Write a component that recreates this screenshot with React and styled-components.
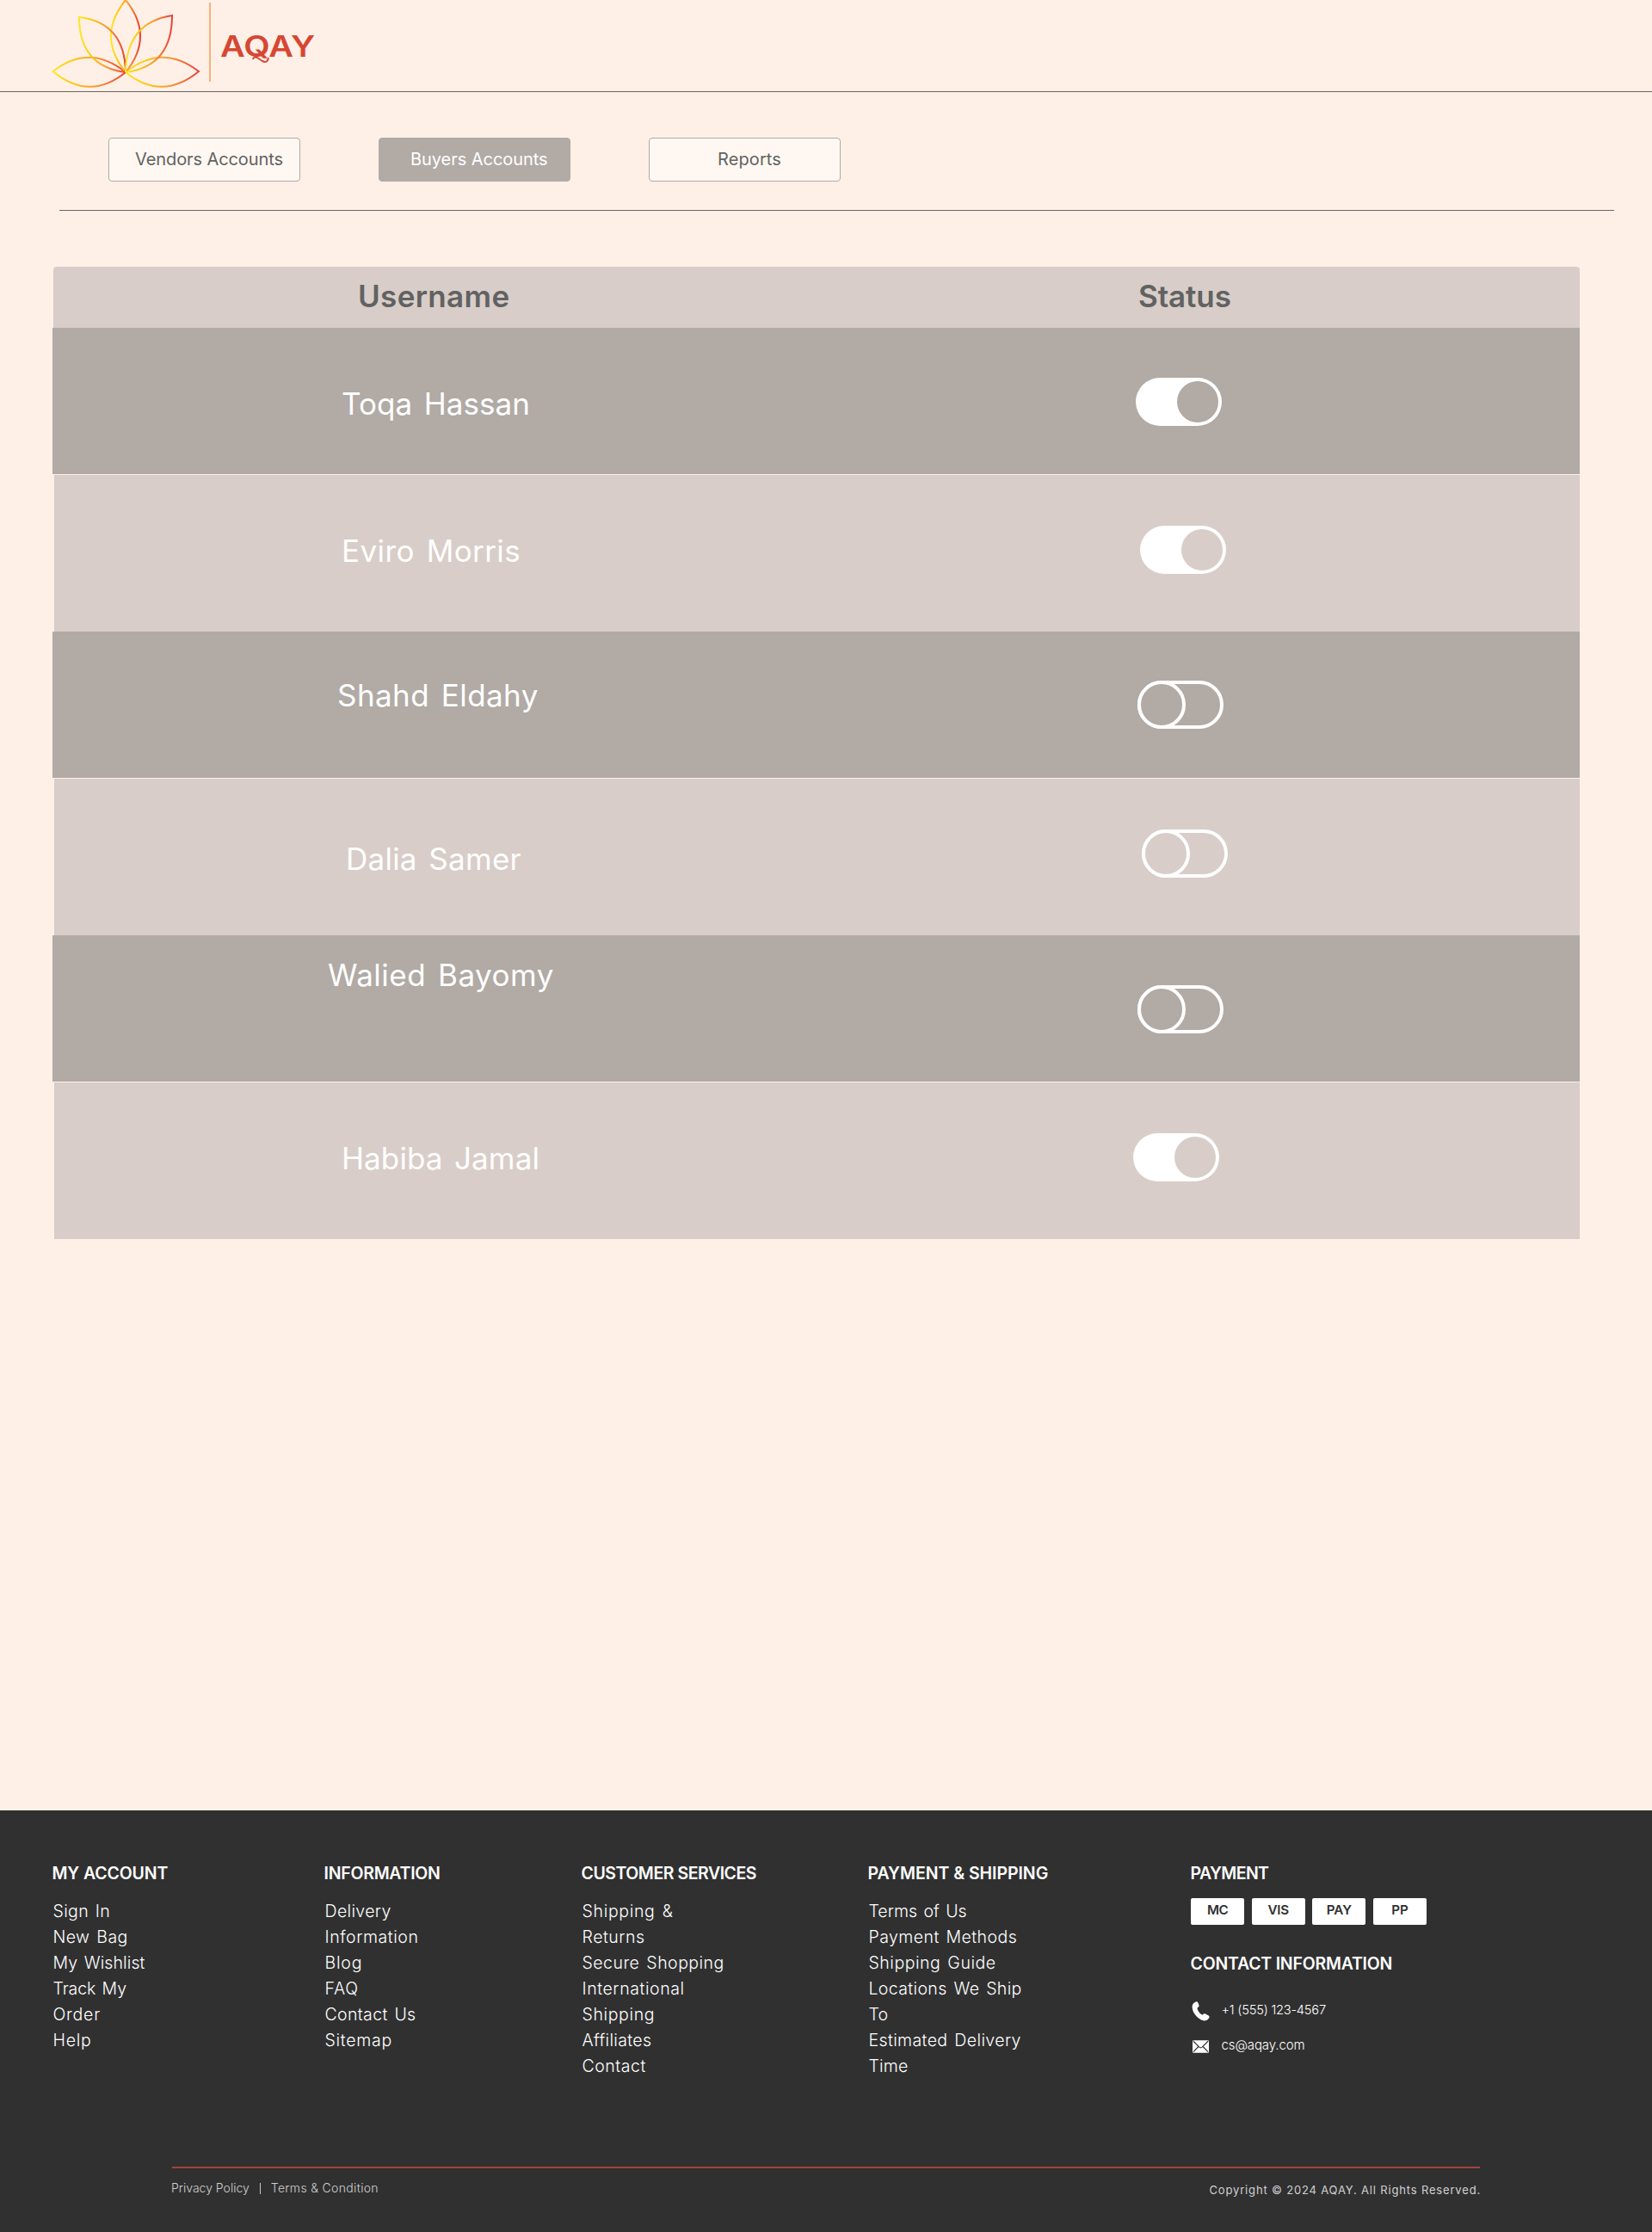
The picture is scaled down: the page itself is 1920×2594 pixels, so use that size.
import React from 'react';
import styled, { createGlobalStyle } from 'styled-components';

const GlobalStyle = createGlobalStyle`
  * { box-sizing: border-box; }
  body {
    margin: 0;
    background: #fff0e7;
    font-family: Inter, "Noto Sans", sans-serif;
  }
`;

const Page = styled.div`
  display: flex;
  flex-direction: column;
  width: 1920px;
  height: 2594px;
  background: #fff0e7;
  overflow: hidden;
`;

const Text = styled.span`
  display: block;
  white-space: nowrap;
  letter-spacing: ${(p) => p.$ls || 0}px;
`;

/* ---------- header ---------- */

const Header = styled.header`
  display: flex;
  align-items: flex-start;
  height: 107px;
  padding-left: 60px;
  border-bottom: 1px solid #686565;
`;

const Lotus = styled.svg`
  display: block;
  width: 174px;
  height: 106px;
`;

const BrandRule = styled.div`
  width: 2px;
  height: 92px;
  margin: 3px 0 0 9px;
  background: #f8b07a;
`;

const Brand = styled.div`
  position: relative;
  margin: 34px 0 0 11px;
`;

const BrandName = styled(Text)`
  color: #d64734;
  font-size: 33.5px;
  font-weight: 600;
  line-height: 40px;
  transform: scaleX(1.18);
  transform-origin: left;
`;

const Swash = styled.svg`
  position: absolute;
  left: 35px;
  top: 30px;
  width: 24px;
  height: 10px;
`;

const petals = [
  ['M146 84Q104 50 61.500 83Q104 118 146 84', 'flat-left'],
  ['M146 84Q188 118 231 83Q188 50 146 84', 'flat-right'],
  ['M146 84Q112 42 146 0Q180 42 146 84', 'top'],
  ['M146 84Q145 26 92 20Q92 77 146 84', 'upper-left'],
  ['M146 84Q147 26 200 18Q200 77 146 84', 'upper-right'],
];

function Logo() {
  return (
    <Lotus viewBox="60 0 174 106" fill="none">
      <defs>
        <linearGradient id="petal">
          <stop offset="0" stopColor="#ffe629" />
          <stop offset="0.3" stopColor="#fcc60f" />
          <stop offset="0.6" stopColor="#f59a38" />
          <stop offset="1" stopColor="#e8413a" />
        </linearGradient>
      </defs>
      {petals.map(([d, id]) => (
        <path key={id} d={d} stroke="url(#petal)" strokeWidth="2" />
      ))}
    </Lotus>
  );
}

/* ---------- tabs ---------- */

const Tabs = styled.nav`
  display: flex;
  gap: 91px;
  padding: 53px 0 0 126px;
`;

const Tab = styled.button`
  width: 223px;
  height: 51px;
  padding: 0 0 1px ${(p) => p.$indent}px;
  border: 1px solid #b1aaa5;
  border-radius: 4px;
  background: ${(p) => (p.$active ? '#b1aaa5' : '#fff8f2')};
  color: ${(p) => (p.$active ? '#fff' : '#626262')};
  font: 400 20px/48px Inter, sans-serif;
  text-align: left;
`;

const Divider = styled.div`
  width: 1807px;
  height: 1px;
  margin: 33px 0 0 69px;
  background: #656866;
`;

/* ---------- table ---------- */

const Table = styled.section`
  display: flex;
  flex-direction: column;
  align-items: flex-end;
  width: 1836px;
  margin-top: 65px;
`;

const HeadRow = styled.div`
  display: grid;
  grid-template-columns: 1fr 519px;
  width: 1774px;
  height: 71px;
  padding-top: 12px;
  border-radius: 4px 4px 0 0;
  background: #d8cdc8;
  color: #616262;
  font-size: 35px;
  font-weight: 600;
  line-height: 44px;
`;

const HeadCell = styled(Text)`
  padding-left: ${(p) => p.$indent}px;
`;

const Row = styled.div`
  display: grid;
  grid-template-columns: 1fr 519px;
  align-items: start;
  width: ${(p) => (p.$dark ? 1775 : 1773)}px;
  height: ${(p) => (p.$dark ? 170 : 182)}px;
  margin-bottom: ${(p) => (p.$dark ? 1 : 0)}px;
  background: ${(p) => (p.$dark ? '#b1aaa5' : '#d8cdc8')};
`;

const Name = styled(Text)`
  margin: ${(p) => p.$top}px 0 0 ${(p) => p.$indent}px;
  color: #fff;
  font-size: 35px;
  font-weight: 400;
  line-height: 40px;
  word-spacing: 3.5px;
`;

const Switch = styled.div`
  display: flex;
  justify-content: ${(p) => (p.$on ? 'flex-end' : 'flex-start')};
  align-items: center;
  width: 100px;
  height: 56px;
  margin: ${(p) => p.$top}px 0 0 ${(p) => p.$indent}px;
  border: ${(p) => (p.$on ? 0 : 4)}px solid #fff;
  padding: ${(p) => (p.$on ? '0 4px' : '0')};
  border-radius: 28px;
  background: ${(p) => (p.$on ? '#fff' : 'transparent')};
`;

const Knob = styled.div`
  flex: none;
  width: ${(p) => (p.$on ? 48 : 56)}px;
  height: ${(p) => (p.$on ? 48 : 56)}px;
  margin-left: ${(p) => (p.$on ? 0 : -4)}px;
  border: ${(p) => (p.$on ? 0 : 4)}px solid #fff;
  border-radius: 50%;
  background: ${(p) => (p.$dark ? '#b1aaa5' : '#d8cdc8')};
`;

const users = [
  { name: 'Toqa Hassan', ls: 0.08, indent: 336, top: 68, on: true, sx: 3, sy: 58 },
  { name: 'Eviro Morris', ls: 0.42, indent: 334, top: 68, on: true, sx: 8, sy: 59 },
  { name: 'Shahd Eldahy', ls: 0.42, indent: 331, top: 54, on: false, sx: 5, sy: 57 },
  { name: 'Dalia Samer', ls: 0.25, indent: 339, top: 73, on: false, sx: 10, sy: 59 },
  { name: 'Walied Bayomy', ls: 0.5, indent: 320, top: 26, on: false, sx: 5, sy: 58 },
  { name: 'Habiba Jamal', ls: 0.1, indent: 334, top: 68, on: true, sx: 0, sy: 59 },
];

/* ---------- footer ---------- */

const Footer = styled.footer`
  flex: none;
  height: 490px;
  margin-top: auto;
  padding-top: 61px;
  background: #303030;
  color: #fff;
`;

const Columns = styled.div`
  display: grid;
  grid-template-columns: 316px 299px 333px 375px auto;
  height: 353px;
  padding-left: 60.5px;
`;

const Heading = styled(Text)`
  font-size: 19.5px;
  font-weight: 600;
  line-height: 24px;
  margin-top: ${(p) => p.$top || 0}px;
`;

const Links = styled.div`
  padding: 17px 0 0 1px;
`;

const Item = styled(Text)`
  font-size: 19.5px;
  font-weight: 300;
  line-height: 30px;
  word-spacing: 2px;
`;

const Cards = styled.div`
  display: flex;
  gap: 8.700px;
  margin: 17px 0 0 0.5px;
`;

const Card = styled.div`
  display: flex;
  justify-content: center;
  width: 62px;
  height: 31px;
  border-radius: 2px;
  background: #fff;
  color: #303030;
  font-size: 15.200px;
  font-weight: 600;
  line-height: 28px;
`;

const Contact = styled.div`
  display: flex;
  gap: 14px;
  height: 24px;
  margin: ${(p) => p.$top}px 0 0 1px;
  font-size: ${(p) => p.$size}px;
  font-weight: 300;
  line-height: 24px;
`;

const PhoneIcon = styled.svg`
  width: 21px;
  height: 23px;
  margin-top: 2px;
`;

const MailIcon = styled.svg`
  width: 19px;
  height: 15px;
  margin: 6px 1px 0;
`;

const Bottom = styled.div`
  display: flex;
  justify-content: space-between;
  width: 1520px;
  margin-left: 200px;
  padding-top: 13px;
  border-top: 2px solid #a3423e;
  color: #d0d0d0;
`;

const Legal = styled.div`
  display: flex;
  gap: 12px;
  margin-left: -1px;
  font-size: 14px;
  font-weight: 300;
  line-height: 20px;
`;

const Pipe = styled.div`
  width: 1px;
  height: 13px;
  margin-top: 4px;
  background: #c8c8c8;
`;

const Copyright = styled(Text)`
  margin: 2px -1px 0 0;
  font-size: 13px;
  line-height: 20px;
`;

const columns = [
  ['MY ACCOUNT', -0.12, [['Sign In', 0.35], ['New Bag', 0.42], ['My Wishlist', 0.1], ['Track My', -0.1], ['Order', 0.8], ['Help', 0.77]]],
  ['INFORMATION', -0.25, [['Delivery', 0.36], ['Information', 0.57], ['Blog', 0.8], ['FAQ', 0.8], ['Contact Us', 0.35], ['Sitemap', 0.74]]],
  ['CUSTOMER SERVICES', -0.46, [['Shipping &', 0.68], ['Returns', 0.52], ['Secure Shopping', 0.48], ['International', 0.58], ['Shipping', 0.63], ['Affiliates', 0.35], ['Contact', 0.54]]],
  ['PAYMENT & SHIPPING', -0.04, [['Terms of Us', 0], ['Payment Methods', 0.44], ['Shipping Guide', 0.53], ['Locations We Ship', 0.36], ['To', 0.13], ['Estimated Delivery', 0.39], ['Time', 0.2]]],
];

export default function App() {
  return (
    <Page>
      <GlobalStyle />
      <Header>
        <Logo />
        <BrandRule />
        <Brand>
          <BrandName>AQAY</BrandName>
          <Swash viewBox="0 0 24 10" fill="none">
            <path d="M3 5Q4 1 8 3L14 7Q20 10 21 3" stroke="#d64734" strokeWidth="2" />
          </Swash>
        </Brand>
      </Header>

      <Tabs>
        <Tab $indent={30}><Text $ls={-0.09}>Vendors Accounts</Text></Tab>
        <Tab $indent={36} $active><Text $ls={-0.05}>Buyers Accounts</Text></Tab>
        <Tab $indent={79}><Text $ls={0.1}>Reports</Text></Tab>
      </Tabs>
      <Divider />

      <Table>
        <HeadRow>
          <HeadCell $indent={354} $ls={0.35}>Username</HeadCell>
          <HeadCell $indent={6} $ls={-0.1}>Status</HeadCell>
        </HeadRow>
        {users.map((u, i) => {
          const dark = i % 2 === 0;
          return (
            <Row key={u.name} $dark={dark}>
              <Name $ls={u.ls} $top={u.top} $indent={u.indent}>{u.name}</Name>
              <Switch $on={u.on} $top={u.sy} $indent={u.sx}>
                <Knob $on={u.on} $dark={dark} />
              </Switch>
            </Row>
          );
        })}
      </Table>

      <Footer>
        <Columns>
          {columns.map(([title, ls, items]) => (
            <div key={title}>
              <Heading $ls={ls}>{title}</Heading>
              <Links>
                {items.map(([label, spacing]) => (
                  <Item key={label} $ls={spacing}>{label}</Item>
                ))}
              </Links>
            </div>
          ))}
          <div>
            <Heading $ls={-0.6}>PAYMENT</Heading>
            <Cards>
              <Card><Text $ls={-0.5}>MC</Text></Card>
              <Card><Text $ls={-0.2}>VIS</Text></Card>
              <Card><Text>PAY</Text></Card>
              <Card><Text>PP</Text></Card>
            </Cards>
            <Heading $top={33} $ls={-0.22}>CONTACT INFORMATION</Heading>
            <Contact $top={30} $size={14.7}>
              <PhoneIcon viewBox="0 0 62 70">
                <path
                  fill="#fff"
                  d="M10 4C16-1 20 1 22 6L25 14C26 19 22 21 19 23C19 32 27 43 37 48C40 44 43 42 48 44L59 50C64 54 61 60 56 64C48 71 37 69 27 62C12 52 1 35 1 19C1 12 4 7 10 4Z"
                />
              </PhoneIcon>
              <Text $ls={-0.23}>+1 (555) 123-4567</Text>
            </Contact>
            <Contact $top={17} $size={15}>
              <MailIcon viewBox="0 0 58 44" fill="none">
                <rect width="58" height="44" rx="4" fill="#fff" />
                <path
                  d="M3 3L24 24Q29 28 34 24L55 3M3 41L21 22M55 41L37 22"
                  stroke="#303030"
                  strokeWidth="3.500"
                />
              </MailIcon>
              <Text $ls={-0.12}>cs@aqay.com</Text>
            </Contact>
          </div>
        </Columns>
        <Bottom>
          <Legal>
            <Text>Privacy Policy</Text>
            <Pipe />
            <Text $ls={0.33}>Terms &amp; Condition</Text>
          </Legal>
          <Copyright $ls={0.83}>Copyright © 2024 AQAY. All Rights Reserved.</Copyright>
        </Bottom>
      </Footer>
    </Page>
  );
}
